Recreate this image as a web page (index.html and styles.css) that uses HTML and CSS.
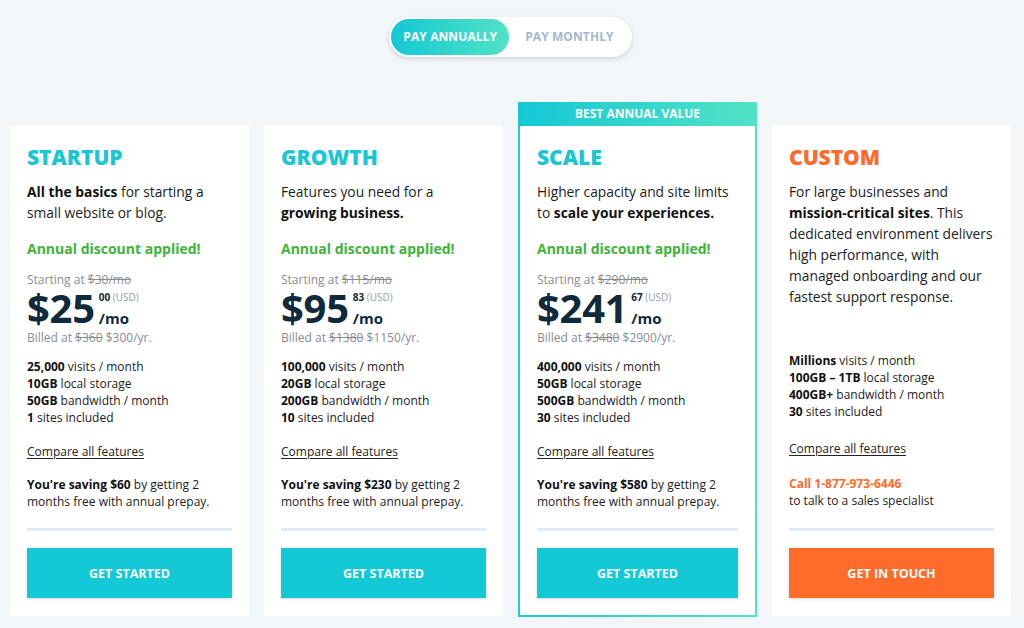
FILE: index.html
```html
<!DOCTYPE html>
<html>
<head>
<meta charset="utf-8">
<link rel="stylesheet" href="styles.css">
</head>
<body>
<div class="page">
  <div class="toggle-row">
    <div class="toggle">
      <span class="opt active">PAY ANNUALLY</span>
      <span class="opt">PAY MONTHLY</span>
    </div>
  </div>
  <div class="plans">
    <div class="card">
      <div class="body">
        <h2 class="title">STARTUP</h2>
        <p class="desc"><b>All the basics</b> for starting a small website or blog.</p>
        <p class="discount">Annual discount applied!</p>
        <p class="muted">Starting at <s>$30/mo</s></p>
        <div class="price"><span class="amount">$25</span><span class="side"><span class="cents">00 <i>(USD)</i></span><span class="per">/mo</span></span></div>
        <p class="muted">Billed at <s>$360</s> $300/yr.</p>
        <ul class="features">
          <li><b>25,000</b> visits / month</li>
          <li><b>10GB</b> local storage</li>
          <li><b>50GB</b> bandwidth / month</li>
          <li><b>1</b> sites included</li>
        </ul>
        <a class="compare">Compare all features</a>
        <p class="saving"><b>You're saving $60</b> by getting 2 months free with annual prepay.</p>
        <div class="divider"></div>
        <a class="btn">GET STARTED</a>
      </div>
    </div>
    <div class="card">
      <div class="body">
        <h2 class="title">GROWTH</h2>
        <p class="desc">Features you need for a <b>growing business.</b></p>
        <p class="discount">Annual discount applied!</p>
        <p class="muted">Starting at <s>$115/mo</s></p>
        <div class="price"><span class="amount">$95</span><span class="side"><span class="cents">83 <i>(USD)</i></span><span class="per">/mo</span></span></div>
        <p class="muted">Billed at <s>$1380</s> $1150/yr.</p>
        <ul class="features">
          <li><b>100,000</b> visits / month</li>
          <li><b>20GB</b> local storage</li>
          <li><b>200GB</b> bandwidth / month</li>
          <li><b>10</b> sites included</li>
        </ul>
        <a class="compare">Compare all features</a>
        <p class="saving"><b>You're saving $230</b> by getting 2 months free with annual prepay.</p>
        <div class="divider"></div>
        <a class="btn">GET STARTED</a>
      </div>
    </div>
    <div class="card featured">
      <div class="badge">BEST ANNUAL VALUE</div>
      <div class="body">
        <h2 class="title">SCALE</h2>
        <p class="desc">Higher capacity and site limits to <b>scale your experiences.</b></p>
        <p class="discount">Annual discount applied!</p>
        <p class="muted">Starting at <s>$290/mo</s></p>
        <div class="price"><span class="amount">$241</span><span class="side"><span class="cents">67 <i>(USD)</i></span><span class="per">/mo</span></span></div>
        <p class="muted">Billed at <s>$3480</s> $2900/yr.</p>
        <ul class="features">
          <li><b>400,000</b> visits / month</li>
          <li><b>50GB</b> local storage</li>
          <li><b>500GB</b> bandwidth / month</li>
          <li><b>30</b> sites included</li>
        </ul>
        <a class="compare">Compare all features</a>
        <p class="saving"><b>You're saving $580</b> by getting 2 months free with annual prepay.</p>
        <div class="divider"></div>
        <a class="btn">GET STARTED</a>
      </div>
    </div>
    <div class="card custom">
      <div class="body">
        <h2 class="title">CUSTOM</h2>
        <p class="desc">For large businesses and <b>mission-critical sites</b>. This dedicated environment delivers high performance, with managed onboarding and our fastest support response.</p>
        <ul class="features">
          <li><b>Millions</b> visits / month</li>
          <li><b>100GB – 1TB</b> local storage</li>
          <li><b>400GB+</b> bandwidth / month</li>
          <li><b>30</b> sites included</li>
        </ul>
        <a class="compare">Compare all features</a>
        <p class="call"><b>Call 1-877-973-6446</b><br>to talk to a sales specialist</p>
        <div class="divider"></div>
        <a class="btn">GET IN TOUCH</a>
      </div>
    </div>
  </div>
</div>
</body>
</html>
```

FILE: styles.css
```css
* { box-sizing: border-box; }
html, body { margin: 0; padding: 0; }
body {
  background: #f3f6f9;
  font-family: "Open Sans", "Liberation Sans", sans-serif;
  color: #1c1c1c;
  width: 1024px;
  height: 628px;
  overflow: hidden;
}
.page {
  width: 1001px;
  margin-left: 10px;
  padding-top: 17px;
}
.toggle-row {
  display: flex;
  justify-content: center;
}
.toggle {
  display: flex;
  padding: 2px;
  background: #fff;
  border-radius: 20px;
  box-shadow: 0 2px 5px rgba(40, 60, 90, 0.18);
}
.opt {
  height: 36px;
  line-height: 36px;
  padding: 0 16px;
  font-size: 12px;
  font-weight: 700;
  color: #a4b7cf;
  border-radius: 18px;
  letter-spacing: 0.1px;
}
.opt.active {
  padding: 0 12px;
  color: #fff;
  background: linear-gradient(90deg, #14c8d4, #52e2c5);
}
.plans {
  margin-top: 45px;
  display: grid;
  grid-template-columns: repeat(4, 239px);
  column-gap: 15px;
  height: 514px;
}
.card {
  display: flex;
  flex-direction: column;
  background: #fff;
  margin-top: 24px;
}
.card.featured {
  margin-top: 0;
  margin-bottom: -1px;
  border-style: solid;
  border-width: 0 2px 2px 2px;
  border-image: linear-gradient(90deg, #1ccbd2, #4fe2c5) 1;
}
.badge {
  height: 24px;
  line-height: 24px;
  margin: 0 -2px;
  text-align: center;
  color: #fff;
  font-size: 12px;
  font-weight: 700;
  background: linear-gradient(90deg, #14c8d4, #52e2c5);
}
.body {
  flex: 1;
  display: flex;
  flex-direction: column;
  padding: 19px 17px 18px 17px;
}
.featured .body { padding-bottom: 17px; }
.title {
  margin: 0;
  font-size: 21px;
  line-height: 24px;
  font-weight: 800;
  color: #18c6d4;
}
.custom .title { color: #ff6b2b; }
p { margin: 0; }
.desc {
  margin-top: 12px;
  font-size: 13.8px;
  line-height: 21px;
}
.desc b { font-weight: 700; color: #111; }
.discount {
  margin-top: 15px;
  font-size: 14px;
  line-height: 21px;
  font-weight: 700;
  color: #40b23a;
}
.muted {
  font-size: 12px;
  line-height: 17px;
  color: #888c90;
}
.discount + .muted { margin-top: 12px; }
.muted s { color: #888c90; }
.price {
  display: flex;
  height: 40px;
  margin-bottom: 1px;
}
.amount {
  font-size: 40px;
  line-height: 40px;
  font-weight: 700;
  color: #0f2a3b;
  letter-spacing: -0.3px;
}
.side {
  display: flex;
  flex-direction: column;
  margin-left: 4px;
  padding-top: 3px;
}
.cents {
  font-size: 10px;
  line-height: 12px;
  font-weight: 700;
  color: #0f2a3b;
}
.cents i {
  font-style: normal;
  font-weight: 400;
  color: #9a9ea3;
}
.per {
  margin-top: 6px;
  font-size: 15px;
  line-height: 18px;
  font-weight: 700;
  color: #0f2a3b;
}
.features {
  list-style: none;
  margin: 12px 0 0 0;
  padding: 0;
  font-size: 12px;
  line-height: 17px;
}
.features b { font-weight: 700; color: #111; }
.custom .features { margin-top: 45px; }
.compare {
  margin-top: 17px;
  font-size: 12px;
  line-height: 17px;
  text-decoration: underline;
  text-underline-offset: 2px;
  color: #222;
}
.custom .compare { margin-top: 20px; }
.saving {
  margin-top: 16px;
  font-size: 12px;
  line-height: 17px;
}
.saving b { font-weight: 700; color: #111; }
.call {
  margin-top: 18px;
  font-size: 12px;
  line-height: 17px;
}
.call b { color: #ff6b2b; font-weight: 700; }
.divider {
  margin-top: auto;
  height: 3px;
  background: #e2eaf2;
}
.btn {
  margin-top: 17px;
  height: 50px;
  line-height: 51px;
  text-align: center;
  background: #12c9d5;
  color: #fff;
  font-size: 12.5px;
  font-weight: 700;
  box-shadow: 0 1px 3px rgba(0, 0, 0, 0.15);
}
.custom .btn { background: #ff6c2a; }
```
